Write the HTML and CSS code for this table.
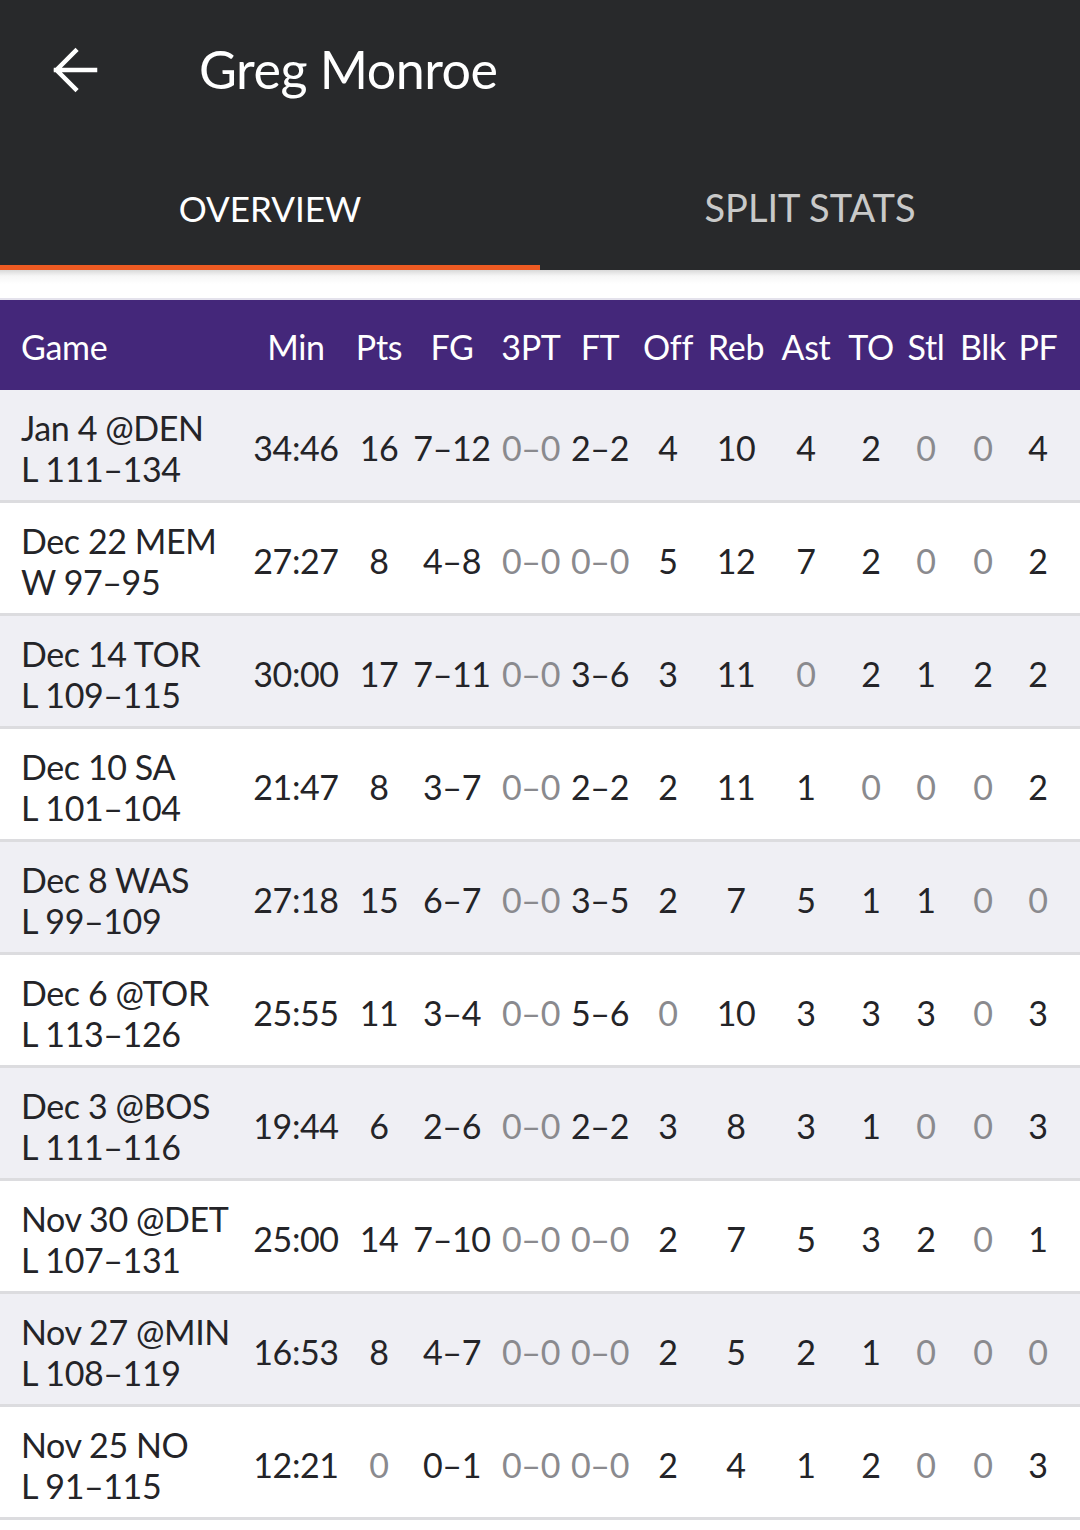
FILE: index.html
```html
<!DOCTYPE html>
<html>
<head>
<meta charset="utf-8">
<link rel="stylesheet" href="styles.css">
</head>
<body>
<header class="appbar">
  <div class="toolbar">
    <svg class="back" width="80" height="60" viewBox="30 40 80 60" aria-hidden="true">
      <path d="M95 70 H56 M75.5 51 L56.5 70 L75.5 89" fill="none" stroke="#fff" stroke-width="4.5" stroke-linecap="square"/>
    </svg>
    <h1 class="title">Greg Monroe</h1>
  </div>
  <nav class="tabs">
    <div class="tab active">OVERVIEW</div>
    <div class="tab">SPLIT STATS</div>
  </nav>
</header>
<div class="spacer"></div>
<section class="table">
  <div class="row head">
    <div class="game">Game</div><div>Min</div><div>Pts</div><div>FG</div><div>3PT</div><div>FT</div><div>Off</div><div>Reb</div><div>Ast</div><div>TO</div><div>Stl</div><div>Blk</div><div>PF</div>
  </div>
  <div class="row odd">
    <div class="game">Jan 4 @DEN<br>L 111–134</div><div>34:46</div><div>16</div><div>7–12</div><div class="z">0–0</div><div>2–2</div><div>4</div><div>10</div><div>4</div><div>2</div><div class="z">0</div><div class="z">0</div><div>4</div>
  </div>
  <div class="row">
    <div class="game">Dec 22 MEM<br>W 97–95</div><div>27:27</div><div>8</div><div>4–8</div><div class="z">0–0</div><div class="z">0–0</div><div>5</div><div>12</div><div>7</div><div>2</div><div class="z">0</div><div class="z">0</div><div>2</div>
  </div>
  <div class="row odd">
    <div class="game">Dec 14 TOR<br>L 109–115</div><div>30:00</div><div>17</div><div>7–11</div><div class="z">0–0</div><div>3–6</div><div>3</div><div>11</div><div class="z">0</div><div>2</div><div>1</div><div>2</div><div>2</div>
  </div>
  <div class="row">
    <div class="game">Dec 10 SA<br>L 101–104</div><div>21:47</div><div>8</div><div>3–7</div><div class="z">0–0</div><div>2–2</div><div>2</div><div>11</div><div>1</div><div class="z">0</div><div class="z">0</div><div class="z">0</div><div>2</div>
  </div>
  <div class="row odd">
    <div class="game">Dec 8 WAS<br>L 99–109</div><div>27:18</div><div>15</div><div>6–7</div><div class="z">0–0</div><div>3–5</div><div>2</div><div>7</div><div>5</div><div>1</div><div>1</div><div class="z">0</div><div class="z">0</div>
  </div>
  <div class="row">
    <div class="game">Dec 6 @TOR<br>L 113–126</div><div>25:55</div><div>11</div><div>3–4</div><div class="z">0–0</div><div>5–6</div><div class="z">0</div><div>10</div><div>3</div><div>3</div><div>3</div><div class="z">0</div><div>3</div>
  </div>
  <div class="row odd">
    <div class="game">Dec 3 @BOS<br>L 111–116</div><div>19:44</div><div>6</div><div>2–6</div><div class="z">0–0</div><div>2–2</div><div>3</div><div>8</div><div>3</div><div>1</div><div class="z">0</div><div class="z">0</div><div>3</div>
  </div>
  <div class="row">
    <div class="game">Nov 30 @DET<br>L 107–131</div><div>25:00</div><div>14</div><div>7–10</div><div class="z">0–0</div><div class="z">0–0</div><div>2</div><div>7</div><div>5</div><div>3</div><div>2</div><div class="z">0</div><div>1</div>
  </div>
  <div class="row odd">
    <div class="game">Nov 27 @MIN<br>L 108–119</div><div>16:53</div><div>8</div><div>4–7</div><div class="z">0–0</div><div class="z">0–0</div><div>2</div><div>5</div><div>2</div><div>1</div><div class="z">0</div><div class="z">0</div><div class="z">0</div>
  </div>
  <div class="row">
    <div class="game">Nov 25 NO<br>L 91–115</div><div>12:21</div><div class="z">0</div><div>0–1</div><div class="z">0–0</div><div class="z">0–0</div><div>2</div><div>4</div><div>1</div><div>2</div><div class="z">0</div><div class="z">0</div><div>3</div>
  </div>
</section>
</body>
</html>
```

FILE: styles.css
```css
html, body {
  margin: 0;
  padding: 0;
  background: #ffffff;
}
body {
  width: 1080px;
  font-family: "Lato", "Open Sans", sans-serif;
  color: #242428;
}
.appbar {
  background: #28292b;
}
.toolbar {
  height: 140px;
  display: flex;
  align-items: flex-start;
}
.back {
  margin: 40px 0 0 30px;
  display: block;
}
.title {
  margin: 37px 0 0 89px;
  font-weight: 400;
  font-size: 52px;
  line-height: 64px;
  color: #ffffff;
  letter-spacing: -0.5px;
}
.tabs {
  display: flex;
  height: 130px;
}
.tab {
  flex: 1;
  text-align: center;
  font-size: 38px;
  line-height: 46px;
  padding-top: 44px;
  color: #c9c9c9;
  box-sizing: border-box;
}
.tab.active {
  color: #ffffff;
  font-size: 35px;
  padding-top: 45px;
  border-bottom: 5px solid #ee5a22;
}
.spacer {
  height: 28px;
  background: linear-gradient(#d9d9d9 0px, #f6f6f6 6px, #ffffff 14px);
  border-bottom: 2px solid #e4e2ec;
}
.row {
  display: grid;
  grid-template-columns: 243px 106px 60px 86px 72px 66px 70px 66px 74px 56px 54px 60px 50px;
  align-items: center;
  height: 110px;
  border-bottom: 3px solid #dcdcdf;
  font-size: 34px;
  line-height: 41px;
  letter-spacing: -0.4px;
  white-space: nowrap;
}
.row > div {
  text-align: center;
  padding-top: 5px;
}
.row > .game {
  text-align: left;
  padding-left: 21px;
}
.row.odd {
  background: #efeff4;
}
.row.head {
  height: 90px;
  border-bottom: 0;
  background: #44277a;
  color: #ffffff;
  font-size: 34px;
  letter-spacing: -0.3px;
}
.row.head > div {
  padding-top: 3px;
}
.z {
  color: #8a8a8e;
}
```
